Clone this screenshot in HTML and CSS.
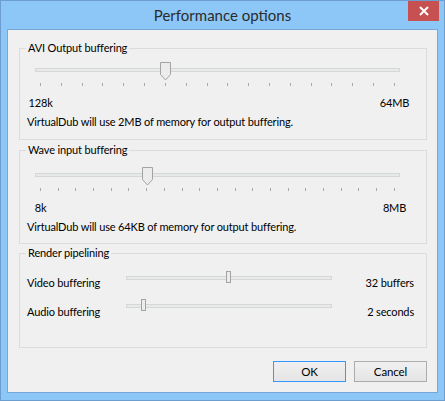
FILE: index.html
```html
<!DOCTYPE html>
<html>
<head>
<meta charset="utf-8">
<link rel="stylesheet" href="styles.css">
</head>
<body>
<div class="frame">
  <div class="titlebar">
    <span class="title">Performance options</span>
    <div class="close">
      <svg width="10" height="10" viewBox="0 0 10 10"><path d="M1 1 L9 9 M9 1 L1 9" stroke="#fff" stroke-width="2"/></svg>
    </div>
  </div>
  <div class="client">
    <fieldset class="group g1">
      <legend>AVI Output buffering</legend>
      <div class="slider s1">
        <div class="track"></div>
        <svg class="thumb" style="left:125px" width="12" height="19" viewBox="0 0 12 19"><path d="M0.5 0.5 H10.5 V12.5 L5.5 18 L0.5 12.5 Z" fill="#ececec" stroke="#a3a3a3"/></svg>
        <div class="ticks"><i></i><i></i><i></i><i></i><i></i><i></i><i></i><i></i><i></i><i></i><i></i><i></i><i></i><i></i><i></i><i></i><i></i><i></i></div>
        <div class="ends"><span>128k</span><span>64MB</span></div>
      </div>
      <p class="msg">VirtualDub will use 2MB of memory for output buffering.</p>
    </fieldset>
    <fieldset class="group g2">
      <legend>Wave input buffering</legend>
      <div class="slider s2">
        <div class="track"></div>
        <svg class="thumb" style="left:107px" width="12" height="19" viewBox="0 0 12 19"><path d="M0.5 0.5 H10.5 V12.5 L5.5 18 L0.5 12.5 Z" fill="#ececec" stroke="#a3a3a3"/></svg>
        <div class="ticks"><i></i><i></i><i></i><i></i><i></i><i></i><i></i><i></i><i></i><i></i><i></i><i></i><i></i><i></i><i></i><i></i><i></i><i></i><i></i><i></i><i></i></div>
        <div class="ends"><span>8k</span><span>8MB</span></div>
      </div>
      <p class="msg">VirtualDub will use 64KB of memory for output buffering.</p>
    </fieldset>
    <fieldset class="group g3">
      <legend>Render pipelining</legend>
      <div class="row r1">
        <span class="rlabel">Video buffering</span>
        <div class="mini">
          <div class="track"></div>
          <div class="mthumb" style="left:100px"></div>
        </div>
        <span class="rvalue">32 buffers</span>
      </div>
      <div class="row r2">
        <span class="rlabel">Audio buffering</span>
        <div class="mini">
          <div class="track"></div>
          <div class="mthumb" style="left:15px"></div>
        </div>
        <span class="rvalue">2 seconds</span>
      </div>
    </fieldset>
    <div class="buttons">
      <button class="btn default">OK</button>
      <button class="btn">Cancel</button>
    </div>
  </div>
</div>
</body>
</html>
```

FILE: styles.css
```css
* { box-sizing: border-box; }
html, body { margin: 0; padding: 0; }
body {
  font-family: Lato, "Noto Sans", sans-serif;
  font-size: 11px;
  letter-spacing: -0.15px;
  color: #000;
}
.frame {
  width: 445px;
  height: 401px;
  background: #8cc7f7;
  border: 1px solid #6c9ed0;
  padding: 0 6px 7px 6px;
  display: flex;
  flex-direction: column;
}
.titlebar {
  position: relative;
  height: 28px;
  flex: none;
  display: flex;
  justify-content: center;
  align-items: flex-start;
}
.title {
  font-size: 15px;
  letter-spacing: 0;
  line-height: 20px;
  margin-top: 4px;
  color: #2b2b2b;
}
.close {
  position: absolute;
  right: -1px;
  top: 0;
  width: 31px;
  height: 20px;
  background: #c75050;
  display: flex;
  align-items: center;
  justify-content: center;
}
.close svg { display: block; }
.client {
  flex: 1;
  background: #f0f0f0;
  border: 1px solid #76a7d6;
  padding: 10px 10px 0 11px;
  display: flex;
  flex-direction: column;
}
.group {
  margin: 0;
  padding: 0;
  border: 1px solid #dcdcdc;
  width: 408px;
  min-width: 0;
}
.group legend {
  padding: 0 2px;
  margin-left: 6px;
  line-height: 16px;
}
.g1 { height: 100px; }
.g2 { height: 102px; margin-top: 2px; }
.g3 { height: 103px; margin-top: 1px; }
.slider {
  position: relative;
  margin-left: 15px;
  width: 365px;
}
.s1 { margin-top: 12px; }
.s2 { margin-top: 15px; }
.track {
  height: 4px;
  background: #e7eaea;
  border: 1px solid #d6d6d6;
}
.thumb {
  position: absolute;
  top: -6px;
  display: block;
}
.ticks {
  margin-top: 11px;
  padding: 0 5px;
  height: 3px;
  display: flex;
  justify-content: space-between;
}
.ticks i {
  display: block;
  width: 1px;
  height: 3px;
  background: #a8a8a8;
}
.ends {
  margin: 9px 5px 0 5px;
  display: flex;
  justify-content: space-between;
  line-height: 16px;
}
.ends span {
  width: 1px;
  display: flex;
  justify-content: center;
  white-space: nowrap;
}
.msg {
  margin: 3px 0 0 7px;
  line-height: 16px;
}
.row {
  display: flex;
  align-items: center;
  height: 16px;
  padding-left: 7px;
}
.r1 { margin-top: 14px; }
.r2 { margin-top: 13px; }
.rlabel { width: 99px; line-height: 16px; }
.mini {
  position: relative;
  width: 206px;
  margin-top: -10px;
}
.r2 .mini { margin-top: -12px; }
.mini .track { height: 4px; }
.mthumb {
  position: absolute;
  top: -5px;
  width: 5px;
  height: 12px;
  background: #ececec;
  border: 1px solid #a3a3a3;
}
.rvalue {
  flex: 1;
  text-align: right;
  padding-right: 12px;
  line-height: 16px;
}
.buttons {
  display: flex;
  justify-content: flex-end;
  gap: 8px;
  margin-top: 13px;
  padding-right: 0;
}
.btn {
  width: 73px;
  height: 21px;
  font-family: Lato, "Noto Sans", sans-serif;
  font-size: 11.5px;
  letter-spacing: -0.1px;
  line-height: 16px;
  padding: 0;
  color: #000;
  border: 1px solid #acacac;
  background: linear-gradient(#f0f0f0, #e5e5e5);
  border-radius: 0;
}
.btn.default { border-color: #3399ff; }
```
